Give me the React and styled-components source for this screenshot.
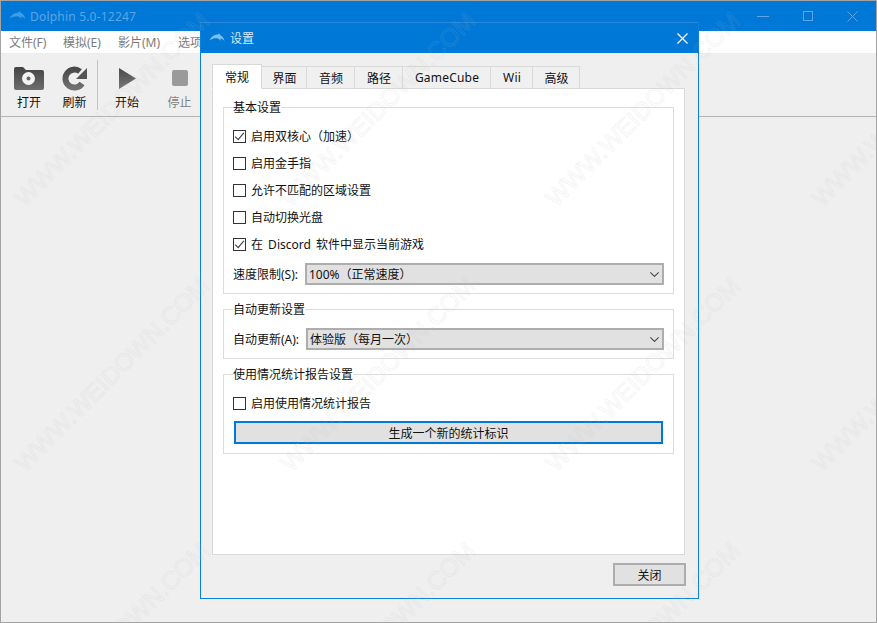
import React from 'react'
import styled, { createGlobalStyle } from 'styled-components'

const GlobalStyle = createGlobalStyle`
  html, body {
    margin: 0;
    padding: 0;
    background: #efefef;
  }
  * {
    box-sizing: border-box;
  }
`

const Desktop = styled.div`
  position: relative;
  width: 877px;
  height: 623px;
  overflow: hidden;
  font-family: "Noto Sans", "Noto Sans CJK SC", sans-serif;
  font-size: 12px;
  color: #111;
`

const MainWindow = styled.div`
  display: flex;
  flex-direction: column;
  height: 100%;
  border: 1px solid #a3a3a3;
  background: #efefef;
`

const TitleBar = styled.div`
  display: flex;
  align-items: center;
  flex: none;
  height: 30px;
  padding-left: 8px;
  background: #0078d7;
`

const TitleText = styled.span`
  margin-left: ${(p) => p.$gap || 4}px;
  color: ${(p) => p.$color};
  font-size: 12px;
  letter-spacing: ${(p) => (p.$latin ? '0.2px' : '0')};
`

const WindowControls = styled.div`
  display: flex;
  align-items: center;
  margin-left: auto;
  padding-right: 1px;
  height: 100%;
`

const ControlSlot = styled.div`
  display: flex;
  align-items: center;
  justify-content: center;
  width: ${(p) => p.$width || 45}px;
  height: 100%;
  color: ${(p) => p.$color || '#5ea4e6'};
`

const MenuBar = styled.div`
  display: flex;
  align-items: center;
  flex: none;
  height: 23px;
  padding-left: 8px;
  background: #fff;
  border-bottom: 1px solid #ececec;
`

const MenuItem = styled.span`
  width: ${(p) => p.$width}px;
  color: #7b7b7b;
  font-size: 12px;
`

const Toolbar = styled.div`
  display: flex;
  flex: none;
  height: 62px;
  padding-left: 5px;
  margin-top: 1px;
  background: #efefef;
  border-bottom: 1px solid #b4b4b4;
`

const ToolButton = styled.div`
  display: flex;
  flex-direction: column;
  align-items: center;
  width: ${(p) => p.$width}px;
  padding-top: 10px;
  color: ${(p) => (p.$dim ? '#808080' : '#111')};
`

const ToolIcon = styled.div`
  display: flex;
  align-items: center;
  justify-content: center;
  height: 26px;
`

const ToolLabel = styled.span`
  margin-top: 4px;
  line-height: 16px;
`

const ToolSeparator = styled.div`
  width: 1px;
  height: 50px;
  margin: 5px 3px 0 0;
  background: #c4c4c4;
`

const Dialog = styled.div`
  position: absolute;
  left: 200px;
  top: 22px;
  display: flex;
  flex-direction: column;
  width: 499px;
  height: 577px;
  background: #efefef;
  border: 1px solid #0b7fdc;
  border-top-color: #2a88da;
`

const DialogBody = styled.div`
  display: flex;
  flex-direction: column;
  flex: 1;
  padding: 11px 13px 12px 11px;
`

const TabStrip = styled.div`
  display: flex;
  align-items: flex-end;
  flex: none;
  height: 25px;
  margin-bottom: -1px;
`

const Tab = styled.div`
  position: relative;
  display: flex;
  align-items: center;
  justify-content: center;
  width: ${(p) => p.$width}px;
  height: ${(p) => (p.$active ? 25 : 23)}px;
  padding-left: ${(p) => (p.$active ? 0 : 1)}px;
  margin-left: ${(p) => (p.$first ? 0 : -1)}px;
  letter-spacing: ${(p) => (p.$latin ? '0.2px' : '0')};
  background: ${(p) => (p.$active ? '#fff' : '#f0f0f0')};
  border: 1px solid #d9d9d9;
  border-bottom-color: ${(p) => (p.$active ? '#fff' : '#d9d9d9')};
  z-index: ${(p) => (p.$active ? 1 : 0)};
`

const TabPane = styled.div`
  display: flex;
  flex-direction: column;
  gap: 7px;
  flex: 1;
  padding: 10px 10px 0;
  background: #fff;
  border: 1px solid #d9d9d9;
`

const Group = styled.fieldset`
  display: flex;
  flex-direction: column;
  min-width: 0;
  margin: 0;
  padding: ${(p) => p.$pad};
  border: 1px solid #dcdcdc;
`

const GroupTitle = styled.legend`
  height: 16px;
  padding: 0;
  line-height: 17px;
  background: #fff;
`

const CheckRow = styled.label`
  display: flex;
  align-items: center;
  height: 16px;
  margin-bottom: 11px;
  white-space: pre;
  word-spacing: 2px;
`

const Box = styled.span`
  display: flex;
  align-items: center;
  justify-content: center;
  flex: none;
  width: 13px;
  height: 13px;
  margin-right: 5px;
  background: #fff;
  border: 1px solid #333;
`

const SelectRow = styled.div`
  display: flex;
  align-items: center;
  height: 22px;
`

const SelectLabel = styled.span`
  flex: none;
  width: ${(p) => p.$width}px;
`

const Select = styled.div`
  display: flex;
  align-items: center;
  justify-content: space-between;
  flex: 1;
  height: 22px;
  padding: 0 3px 0 2px;
  background: #e1e1e1;
  border: 2px solid #adadad;
`

const ActionButton = styled.div`
  display: flex;
  align-items: center;
  justify-content: center;
  height: 23px;
  margin: ${(p) => p.$margin || 0};
  background: #e1e1e1;
  border: 2px solid ${(p) => (p.$focus ? '#0078d7' : '#adadad')};
`

const DialogFooter = styled.div`
  display: flex;
  justify-content: flex-end;
  flex: none;
  margin: 8px -1px 0 0;
`

const CloseButton = styled(ActionButton)`
  width: 73px;
`

const Watermark = styled.div`
  position: absolute;
  inset: 0;
  overflow: hidden;
  pointer-events: none;
  z-index: 5;
`

const WatermarkText = styled.span`
  position: absolute;
  left: ${(p) => p.$x}px;
  top: ${(p) => p.$y - 20}px;
  font-family: "Liberation Sans", sans-serif;
  font-size: 24.5px;
  line-height: 24px;
  white-space: nowrap;
  color: transparent;
  -webkit-text-stroke: 1px rgba(190, 190, 190, 0.16);
  transform-origin: 0 20px;
  transform: rotate(-45deg);
`

const Dolphin = ({ color, width }) => (
  <svg width={width} height="10" viewBox="0 0 17 10">
    <path
      d="M0.5 7.5C2 4.2 5 1.8 9 1.4L11.2 0.2 11.6 1.7C13.8 2.6 15.6 4.4 16.5 8 15 6.6 13.6 5.8 12 5.5L12.6 7.8 9.6 5.4C6.5 5 3.5 5.6 0.5 7.5Z"
      fill={color}
    />
  </svg>
)

const OpenIcon = () => (
  <svg width="30" height="23" viewBox="0 0 30 23" style={{ display: 'block' }}>
    <defs>
      <linearGradient id="openFill" x1="0" y1="0" x2="0" y2="1">
        <stop offset="0" stopColor="#444" />
        <stop offset="1" stopColor="#6e6e6e" />
      </linearGradient>
    </defs>
    <path
      d="M0 2a2 2 0 0 1 2-2h7l3 3h16a2 2 0 0 1 2 2v16a2 2 0 0 1-2 2H2a2 2 0 0 1-2-2z"
      fill="url(#openFill)"
    />
    <circle cx="14.5" cy="11.5" r="6.5" fill="#f4f4f4" />
    <circle cx="14.5" cy="11.5" r="2" fill="#666" />
  </svg>
)

const RefreshIcon = () => (
  <svg width="26" height="25" viewBox="0 0 26 25" style={{ display: 'block' }}>
    <defs>
      <linearGradient id="refreshFill" x1="0" y1="0" x2="0" y2="1">
        <stop offset="0" stopColor="#4a4a4a" />
        <stop offset="1" stopColor="#707070" />
      </linearGradient>
    </defs>
    <path
      d="M20 17.5A9 9 0 1 1 18 5.5"
      fill="none"
      stroke="url(#refreshFill)"
      strokeWidth="6"
    />
    <polygon points="25,2 25,13 14,13" fill="#555" />
  </svg>
)

const PlayIcon = () => (
  <svg width="17" height="21" viewBox="0 0 17 21" style={{ display: 'block' }}>
    <defs>
      <linearGradient id="playFill" x1="0" y1="0" x2="0" y2="1">
        <stop offset="0" stopColor="#4a4a4a" />
        <stop offset="1" stopColor="#777" />
      </linearGradient>
    </defs>
    <polygon points="0,0 17,10.5 0,21" fill="url(#playFill)" />
  </svg>
)

const StopIcon = () => (
  <svg width="16" height="16" viewBox="0 0 16 16" style={{ display: 'block' }}>
    <rect width="16" height="16" rx="2" fill="#9a9a9a" />
  </svg>
)

const Check = () => (
  <svg width="11" height="11" viewBox="0 0 11 11">
    <path d="M1.2 5.6 4.2 8.6 9.8 1.8" fill="none" stroke="#444" strokeWidth="1.2" />
  </svg>
)

const Chevron = () => (
  <svg width="9" height="5" viewBox="0 0 9 5">
    <path d="M0.3 0.4 4.5 4.4 8.7 0.4" fill="none" stroke="#444" strokeWidth="1.1" />
  </svg>
)

const CrossIcon = ({ size, strokeWidth = 1 }) => (
  <svg width={size} height={size} viewBox={`0 0 ${size} ${size}`}>
    <path
      d={`M0.5 0.5 ${size - 0.5} ${size - 0.5}M${size - 0.5} 0.5 0.5 ${size - 0.5}`}
      stroke="currentColor"
      strokeWidth={strokeWidth}
    />
  </svg>
)

const menus = [
  { label: '文件(F)', width: 54 },
  { label: '模拟(E)', width: 55 },
  { label: '影片(M)', width: 60 },
  { label: '选项(O)', width: 60 },
]

const tools = [
  { label: '打开', width: 46, icon: <OpenIcon /> },
  { label: '刷新', width: 45, icon: <RefreshIcon />, sep: true },
  { label: '开始', width: 52, icon: <PlayIcon /> },
  { label: '停止', width: 53, icon: <StopIcon />, dim: true },
]

const tabs = [
  { label: '常规', width: 50, active: true },
  { label: '界面', width: 46 },
  { label: '音频', width: 49 },
  { label: '路径', width: 49 },
  { label: 'GameCube', width: 89, latin: true },
  { label: 'Wii', width: 43, latin: true },
  { label: '高级', width: 48 },
]

const basicOptions = [
  { label: '启用双核心（加速）', checked: true },
  { label: '启用金手指' },
  { label: '允许不匹配的区域设置' },
  { label: '自动切换光盘' },
  { label: '在 Discord 软件中显示当前游戏', checked: true },
]

// starting point of each repeat of the watermark
const marks = [
  [25, 208], [290.7, 208], [556, 208], [822, 208],
  [25, 473], [290.7, 473], [556, 473], [822, 473],
  [25, 738], [290.7, 738], [556, 738],
]

const CheckOption = ({ label, checked }) => (
  <CheckRow>
    <Box>{checked && <Check />}</Box>
    {label}
  </CheckRow>
)

const App = () => {
  return (
    <Desktop>
      <GlobalStyle />
      <MainWindow>
        <TitleBar>
          <Dolphin color="#3f9de6" width={17} />
          <TitleText $color="#5ea4e6" $latin>Dolphin 5.0-12247</TitleText>
          <WindowControls>
            <ControlSlot>
              <svg width="12" height="1"><rect width="12" height="1" fill="currentColor" /></svg>
            </ControlSlot>
            <ControlSlot>
              <svg width="10" height="10"><rect x="0.5" y="0.5" width="9" height="9" fill="none" stroke="currentColor" /></svg>
            </ControlSlot>
            <ControlSlot>
              <CrossIcon size={11} />
            </ControlSlot>
          </WindowControls>
        </TitleBar>
        <MenuBar>
          {menus.map((m) => (
            <MenuItem key={m.label} $width={m.width}>{m.label}</MenuItem>
          ))}
        </MenuBar>
        <Toolbar>
          {tools.map((t) => (
            <React.Fragment key={t.label}>
              <ToolButton $width={t.width} $dim={t.dim}>
                <ToolIcon>{t.icon}</ToolIcon>
                <ToolLabel>{t.label}</ToolLabel>
              </ToolButton>
              {t.sep && <ToolSeparator />}
            </React.Fragment>
          ))}
        </Toolbar>
      </MainWindow>

      <Dialog>
        <TitleBar>
          <Dolphin color="#7cc0ee" width={16} />
          <TitleText $color="#d5e8f8" $gap={5}>设置</TitleText>
          <WindowControls>
            <ControlSlot $color="#fff" $width={29}>
              <CrossIcon size={11} strokeWidth={1.2} />
            </ControlSlot>
          </WindowControls>
        </TitleBar>
        <DialogBody>
          <TabStrip>
            {tabs.map((t, i) => (
              <Tab key={t.label} $width={t.width} $active={t.active} $latin={t.latin} $first={i === 0}>{t.label}</Tab>
            ))}
          </TabStrip>
          <TabPane>
            <Group $pad="13px 9px 8px">
              <GroupTitle>基本设置</GroupTitle>
              {basicOptions.map((o) => (
                <CheckOption key={o.label} label={o.label} checked={o.checked} />
              ))}
              <SelectRow>
                <SelectLabel $width={72}>速度限制(S):</SelectLabel>
                <Select>
                  100%（正常速度）
                  <Chevron />
                </Select>
              </SelectRow>
            </Group>
            <Group $pad="11px 9px 8px">
              <GroupTitle>自动更新设置</GroupTitle>
              <SelectRow>
                <SelectLabel $width={73}>自动更新(A):</SelectLabel>
                <Select>
                  体验版（每月一次）
                  <Chevron />
                </Select>
              </SelectRow>
            </Group>
            <Group $pad="13px 9px 9px">
              <GroupTitle>使用情况统计报告设置</GroupTitle>
              <CheckOption label="启用使用情况统计报告" />
              <ActionButton $focus $margin="-1px 1px 0">生成一个新的统计标识</ActionButton>
            </Group>
          </TabPane>
          <DialogFooter>
            <CloseButton>关闭</CloseButton>
          </DialogFooter>
        </DialogBody>
      </Dialog>

      <Watermark>
        {marks.map(([x, y]) => (
          <WatermarkText key={`${x}-${y}`} $x={x} $y={y}>WWW.WEIDOWN.COM</WatermarkText>
        ))}
      </Watermark>
    </Desktop>
  )
}

export default App
